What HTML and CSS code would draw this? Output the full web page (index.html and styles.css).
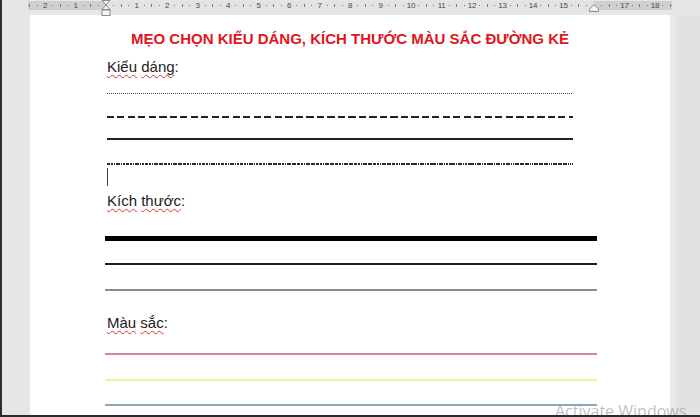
FILE: index.html
```html
<!DOCTYPE html>
<html lang="vi">
<head>
<meta charset="utf-8">
<title>Đường kẻ</title>
<link rel="stylesheet" href="styles.css">
</head>
<body>
<div class="window">
  <div class="ruler-row">
    <div class="ruler">
      <div class="ticks">
        <div class="cell"><span class="lbl"></span><span><i class="dot"></i></span><span><i class="tk"></i></span><span><i class="dot"></i></span></div>
        <div class="cell"><span class="lbl">2</span><span><i class="dot"></i></span><span><i class="tk"></i></span><span><i class="dot"></i></span></div>
        <div class="cell"><span class="lbl">1</span><span><i class="dot"></i></span><span><i class="tk"></i></span><span><i class="dot"></i></span></div>
        <div class="cell"><span class="lbl"></span><span><i class="dot"></i></span><span><i class="tk"></i></span><span><i class="dot"></i></span></div>
        <div class="cell"><span class="lbl">1</span><span><i class="dot"></i></span><span><i class="tk"></i></span><span><i class="dot"></i></span></div>
        <div class="cell"><span class="lbl">2</span><span><i class="dot"></i></span><span><i class="tk"></i></span><span><i class="dot"></i></span></div>
        <div class="cell"><span class="lbl">3</span><span><i class="dot"></i></span><span><i class="tk"></i></span><span><i class="dot"></i></span></div>
        <div class="cell"><span class="lbl">4</span><span><i class="dot"></i></span><span><i class="tk"></i></span><span><i class="dot"></i></span></div>
        <div class="cell"><span class="lbl">5</span><span><i class="dot"></i></span><span><i class="tk"></i></span><span><i class="dot"></i></span></div>
        <div class="cell"><span class="lbl">6</span><span><i class="dot"></i></span><span><i class="tk"></i></span><span><i class="dot"></i></span></div>
        <div class="cell"><span class="lbl">7</span><span><i class="dot"></i></span><span><i class="tk"></i></span><span><i class="dot"></i></span></div>
        <div class="cell"><span class="lbl">8</span><span><i class="dot"></i></span><span><i class="tk"></i></span><span><i class="dot"></i></span></div>
        <div class="cell"><span class="lbl">9</span><span><i class="dot"></i></span><span><i class="tk"></i></span><span><i class="dot"></i></span></div>
        <div class="cell"><span class="lbl">10</span><span><i class="dot"></i></span><span><i class="tk"></i></span><span><i class="dot"></i></span></div>
        <div class="cell"><span class="lbl">11</span><span><i class="dot"></i></span><span><i class="tk"></i></span><span><i class="dot"></i></span></div>
        <div class="cell"><span class="lbl">12</span><span><i class="dot"></i></span><span><i class="tk"></i></span><span><i class="dot"></i></span></div>
        <div class="cell"><span class="lbl">13</span><span><i class="dot"></i></span><span><i class="tk"></i></span><span><i class="dot"></i></span></div>
        <div class="cell"><span class="lbl">14</span><span><i class="dot"></i></span><span><i class="tk"></i></span><span><i class="dot"></i></span></div>
        <div class="cell"><span class="lbl">15</span><span><i class="dot"></i></span><span><i class="tk"></i></span><span><i class="dot"></i></span></div>
        <div class="cell"><span class="lbl"></span><span><i class="dot"></i></span><span><i class="tk"></i></span><span><i class="dot"></i></span></div>
        <div class="cell"><span class="lbl">17</span><span><i class="dot"></i></span><span><i class="tk"></i></span><span><i class="dot"></i></span></div>
        <div class="cell"><span class="lbl">18</span><span><i class="dot"></i></span><span><i class="tk"></i></span><span><i class="dot"></i></span></div>
      </div>
    </div>
    <svg class="marker-left" width="10" height="16" viewBox="0 0 10 16">
      <polygon points="1,0.5 9,0.5 5,5" fill="#f2f2f2" stroke="#8a8a8a" stroke-width="1"/>
      <polygon points="5,5 9,9.5 1,9.5" fill="#f2f2f2" stroke="#8a8a8a" stroke-width="1"/>
      <rect x="1" y="10" width="8" height="5.5" fill="#f7f7f7" stroke="#8a8a8a" stroke-width="1"/>
    </svg>
    <svg class="marker-right" width="10" height="8" viewBox="0 0 10 8">
      <polygon points="5,0.5 9.5,5 9.5,7.5 0.5,7.5 0.5,5" fill="#f2f2f2" stroke="#8a8a8a" stroke-width="1"/>
    </svg>
  </div>

  <div class="workspace">
    <div class="page">
      <h1 class="title">MẸO CHỌN KIỂU DÁNG, KÍCH THƯỚC MÀU SẮC ĐƯỜNG KẺ</h1>
      <div class="content">
        <p class="heading h-style"><span class="sp">Kiểu</span> <span class="sp">dáng</span>:</p>
        <div class="ln dotted"></div>
        <div class="ln dashed"></div>
        <div class="ln solid"></div>
        <div class="ln dashdot"></div>
        <div class="cursor"></div>

        <p class="heading h-size"><span class="sp">Kích</span> <span class="sp">thước</span>:</p>
        <div class="ln wide thick"></div>
        <div class="ln wide medium"></div>
        <div class="ln wide thin"></div>

        <p class="heading h-color"><span class="sp">Màu</span> <span class="sp">sắc</span>:</p>
        <div class="ln wide red"></div>
        <div class="ln wide yellow"></div>
        <div class="ln wide blue"></div>
      </div>
    </div>
    <div class="side"></div>
  </div>

  <div class="watermark">Activate Windows</div>
</div>
</body>
</html>
```

FILE: styles.css
```css
* { box-sizing: border-box; }

html, body {
  margin: 0;
  padding: 0;
  width: 700px;
  height: 417px;
  overflow: hidden;
  background: #e6e6e6;
}

.window {
  position: relative;
  width: 700px;
  height: 417px;
  border-left: 2px solid #2e2e2e;
  border-bottom: 2px solid #2a2a2a;
  background: #e6e6e6;
  overflow: hidden;
  display: flex;
  flex-direction: column;
  font-family: "Liberation Sans", Arial, sans-serif;
}

/* ---------- ruler ---------- */
.ruler-row {
  position: relative;
  height: 15px;
  flex: none;
  padding-left: 26px;
  padding-top: 1px;
}

.ruler {
  width: 644px;
  height: 9px;
  overflow: hidden;
  background: linear-gradient(to right,
    #d0d0d0 0, #d0d0d0 78px,
    #e3e3e3 78px, #e3e3e3 566px,
    #d0d0d0 566px, #d0d0d0 100%);
}

.ticks {
  display: flex;
  margin-left: -17.3px;
  height: 9px;
}

.cell {
  flex: none;
  width: 30.5px;
  height: 9px;
  display: flex;
}

.cell > span {
  width: 7.625px;
  flex: none;
  display: flex;
  align-items: center;
  justify-content: center;
}

.lbl {
  font-size: 8px;
  line-height: 9px;
  color: #4a4a4a;
  letter-spacing: -0.3px;
}

.dot {
  display: block;
  width: 1px;
  height: 1px;
  background: #777;
}

.tk {
  display: block;
  width: 1px;
  height: 3px;
  background: #777;
}

.marker-left {
  position: absolute;
  left: 99px;
  top: 0;
}

.marker-right {
  position: absolute;
  left: 587px;
  top: 4px;
}

/* ---------- workspace ---------- */
.workspace {
  flex: 1;
  display: flex;
  padding-left: 28px;
  min-height: 0;
}

.page {
  width: 640px;
  flex: none;
  background: #ffffff;
  padding-top: 14px;
}

.side {
  width: 30px;
  flex: none;
  border-left: 6px solid #e9e9e9;
  background: #e2e2e2;
}

.title {
  margin: 0;
  text-align: center;
  font-size: 15px;
  line-height: 20px;
  font-weight: bold;
  color: #e0161c;
}

.content {
  padding-left: 75px;
}

.heading {
  margin: 0 0 0 2px;
  font-size: 15px;
  line-height: 20px;
  color: #222222;
}

.sp {
  text-decoration: underline wavy #d8353b;
  text-decoration-thickness: 1px;
  text-underline-offset: 2px;
  text-decoration-skip-ink: none;
}

.h-style { margin-top: 8px; }
.h-size { margin-top: 5px; }
.h-color { margin-top: 22px; }

.ln {
  margin-left: 2px;
  width: 466px;
}

.ln.wide {
  margin-left: 0;
  width: 492px;
}

.dotted {
  margin-top: 16px;
  height: 1px;
  background: repeating-linear-gradient(to right, #444 0, #444 1px, transparent 1px, transparent 2px);
}

.dashed {
  margin-top: 22px;
  height: 2px;
  background: repeating-linear-gradient(to right, #222 0, #222 7px, transparent 7px, transparent 10.5px);
}

.solid {
  margin-top: 20px;
  height: 2px;
  background: #222;
}

.dashdot {
  margin-top: 23px;
  height: 2px;
  background: repeating-linear-gradient(to right,
    #2a2a2a 0, #2a2a2a 3.5px,
    transparent 3.5px, transparent 4.5px,
    #2a2a2a 4.5px, #2a2a2a 6px,
    transparent 6px, transparent 7px,
    #2a2a2a 7px, #2a2a2a 8.5px,
    transparent 8.5px, transparent 9.5px);
}

.cursor {
  margin-top: 3px;
  margin-left: 2px;
  width: 1px;
  height: 18px;
  background: #444;
}

.thick {
  margin-top: 25px;
  height: 5px;
  background: #000;
}

.medium {
  margin-top: 22px;
  height: 2px;
  background: #1e1e1e;
}

.thin {
  margin-top: 24px;
  height: 2px;
  background: #8c8c8c;
}

.red {
  margin-top: 20px;
  height: 2px;
  background: #c98c92;
}

.yellow {
  margin-top: 24px;
  height: 2px;
  background: #f1f19c;
}

.blue {
  margin-top: 23px;
  height: 2px;
  background: #86aab6;
}

.watermark {
  position: absolute;
  left: 553px;
  top: 401px;
  font-family: "Open Sans", "Noto Sans", sans-serif;
  font-size: 16px;
  line-height: 20px;
  color: rgba(150, 150, 150, 0.6);
  white-space: nowrap;
}
```
